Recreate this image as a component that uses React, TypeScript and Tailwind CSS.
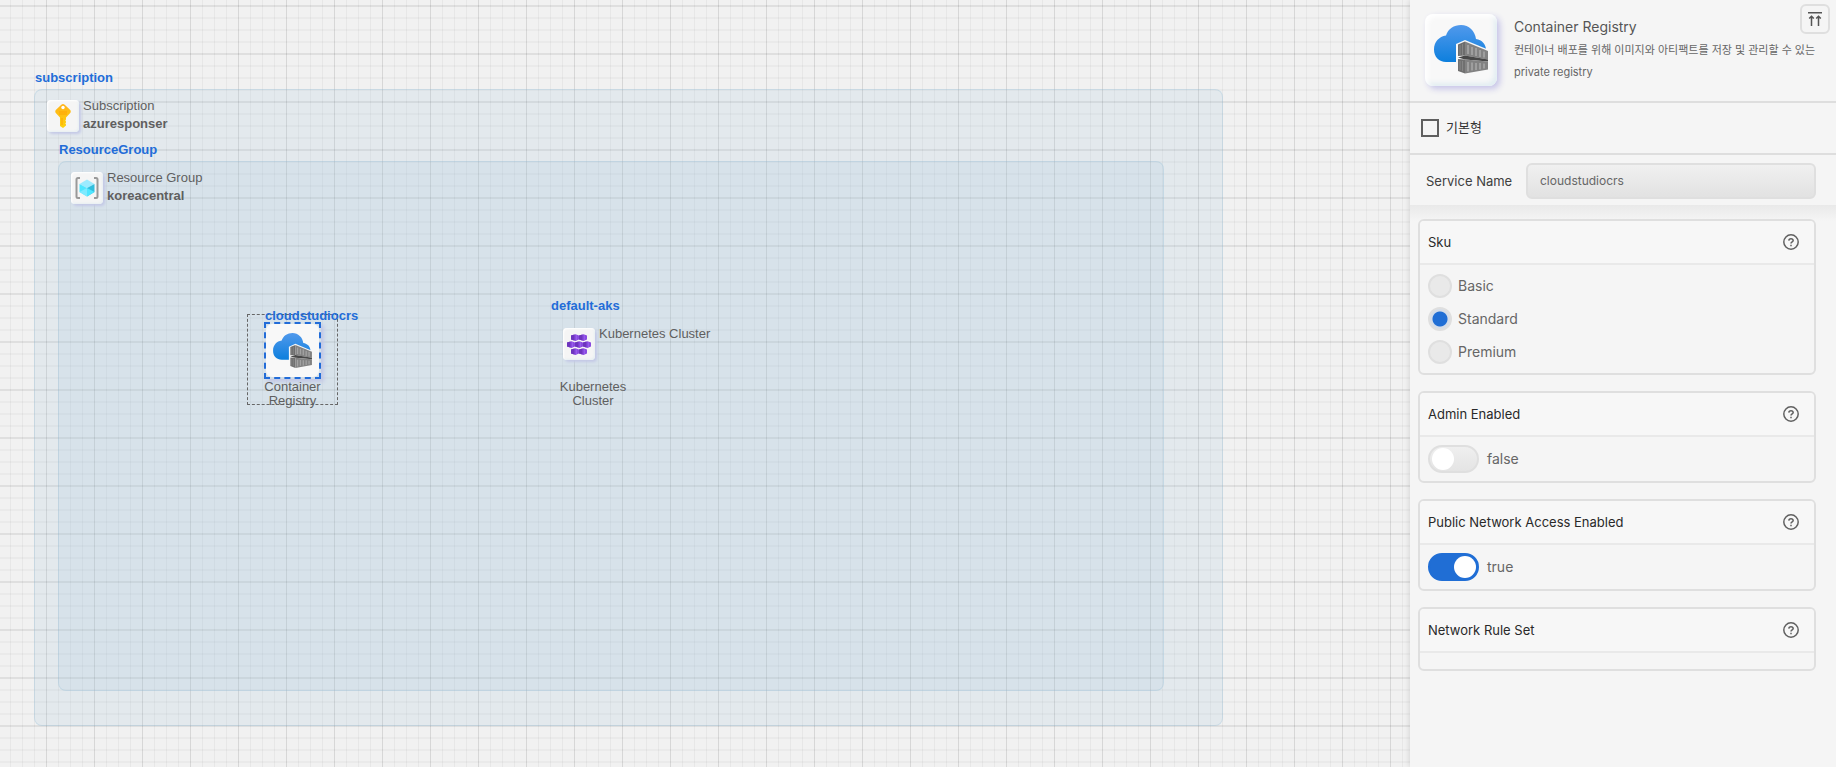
import { useId, useState, type ReactNode } from "react";

function RegistryIcon({ className }: { className: string }) {
  const id = useId();
  return (
    <svg viewBox="0 0 54 50" className={className} aria-hidden="true">
      <defs>
        <linearGradient id={id} x1="0" y1="0" x2="0" y2="1">
          <stop offset="0" stopColor="#5199ec" />
          <stop offset="1" stopColor="#0d7fdd" />
        </linearGradient>
      </defs>
      <path
        d="M12 37C5 37 0 32 0 24.500C0 17 5 11.500 12 10.500C14 4 20 0 27 0C35 0 41 6 42 14C48 15 52 19 52 25C52 32 47 37 40 37Z"
        fill={`url(#${id})`}
      />
      <path d="M22 19L31 15L54 24.500V46L32 50L22 46Z" fill="#f8f8f8" />
      <path d="M24 19.500L31 16.500V30.500L24 31Z" fill="#6c6c6c" />
      <path d="M31 16.500L54 26V34.500L31 30.500Z" fill="#828282" />
      <path d="M24 32.500L31 30.500L54 34.500V36.500L31 34.500Z" fill="#484848" />
      <path d="M24 34L31 34.500V48.500L24 46Z" fill="#707070" />
      <path d="M31 34.500L54 36.500V44.500L31 48.500Z" fill="#828282" />
      <path
        d="M34 20V29M38 22V30M42 23V31M46 25V32M50 26.500V32.500M34 37V46.500M38 37.500V45.500M42 38V45M46 38V44.500M50 38.500V43.500"
        stroke="#a2a2a2"
        strokeWidth="1.800"
      />
      <path d="M26 20V30M28.500 19V30M26 36V45M28.500 36V46" stroke="#858585" />
    </svg>
  );
}

function KeyIcon() {
  return (
    <svg viewBox="0 0 18 24" className="h-6 w-[18px]" aria-hidden="true">
      <defs>
        <linearGradient id="key" x1="0" y1="0" x2="0" y2="1">
          <stop offset="0" stopColor="#ffb31a" />
          <stop offset="1" stopColor="#fdd10e" />
        </linearGradient>
      </defs>
      <path
        d="M7.300 .7Q9 -.5 10.700 .7L16 5.800Q17.500 7.500 16 9.300L12 13.500V15.500L11.300 16.500L12 17.500V18.500L11.300 19.500L12 20.500V21.500L9 24L6 22V13.500L2 9.300Q.5 7.500 2 5.800Z"
        fill="url(#key)"
      />
      <circle cx="9" cy="3.500" r="1.700" fill="#fff" />
      <path d="M5 8H13M5 10H13" stroke="#ffa000" strokeWidth=".8" />
      <path d="M8 14V21" stroke="#ffa000" strokeWidth=".8" />
    </svg>
  );
}

function ResourceGroupIcon() {
  return (
    <svg viewBox="0 0 24 22" className="h-[22px] w-6" aria-hidden="true">
      <path
        d="M5 1H3Q1.500 1 1.500 2.500V19.500Q1.500 21 3 21H5M19 1H21Q22.500 1 22.500 2.500V19.500Q22.500 21 21 21H19"
        fill="none"
        stroke="#999"
        strokeWidth="2"
      />
      <path d="M12 2.500L19.500 7L12 11L4.500 7Z" fill="#9cebff" />
      <path d="M4.500 7L12 11V19.500L4.500 15Z" fill="#50e6ff" />
      <path d="M19.500 7L12 11V19.500L19.500 15Z" fill="#32bedd" />
      <path d="M4.500 15L12 11V19.500Z" fill="#7eeaff" />
      <path d="M19.500 15L12 11V19.500Z" fill="#50e6ff" />
    </svg>
  );
}

const pods = [
  [4, 0], [12, 0],
  [0, 7], [8, 7], [16, 7],
  [4, 14], [12, 14],
];

function KubernetesIcon() {
  return (
    <svg viewBox="0 0 24 21" className="h-[21px] w-6" aria-hidden="true">
      {pods.map(([x, y]) => (
        <g key={`${x}-${y}`} transform={`translate(${x} ${y})`}>
          <path d="M0 1.500L4.500 .2L8 1.500V5.500L4.500 6.900L0 5.500Z" fill="#8a4ae0" />
          <path d="M0 1.500L3.500 .5V6.600L0 5.500Z" fill="#6d35bd" />
          <path d="M5.500 1.200V6" stroke="#9a66ee" strokeWidth=".7" />
        </g>
      ))}
    </svg>
  );
}

function Tile({ children }: { children: ReactNode }) {
  return (
    <span className="flex size-8 shrink-0 items-center justify-center rounded bg-[#f5f5f5] shadow-[2px_2px_3px_#c3c8e6,inset_1px_1px_2px_#ffffff,inset_-1px_-1px_2px_#e6eff2]">
      {children}
    </span>
  );
}

function NodeHeading({ icon, kind, name }: { icon: ReactNode; kind: string; name?: string }) {
  return (
    <div className="flex gap-1">
      <Tile>{icon}</Tile>
      <p className="-mt-[3px] flex flex-col whitespace-nowrap text-[13px] leading-[18px] text-[#5f5f5f]">
        <span>{kind}</span>
        {name && <strong>{name}</strong>}
      </p>
    </div>
  );
}

function Canvas() {
  return (
    <main className="relative min-w-0 flex-1 overflow-hidden bg-[#f1f1f1] font-['Liberation_Sans',Arial,sans-serif] text-[13px]">
      <div
        aria-hidden="true"
        className="absolute inset-0 bg-[linear-gradient(to_right,#00000012_1px,transparent_1px),linear-gradient(to_bottom,#0000000c_2px,transparent_2px),linear-gradient(to_right,#0000000b_1px,transparent_1px),linear-gradient(to_bottom,#00000007_2px,transparent_2px)] bg-[size:48px_48px,48px_48px,12px_12px,12px_12px] bg-[position:46px_5px,46px_5px,10px_5px,10px_5px]"
      />

      <section className="absolute top-[89px] left-[34px] h-[637px] w-[1189px] rounded-lg border border-[#99bfd84d] bg-[#99bfd829]">
        <h2 className="absolute -top-5 left-0 leading-4 font-bold text-[#226cd8]">subscription</h2>
        <div className="absolute top-[10px] left-[12px]">
          <NodeHeading icon={<KeyIcon />} kind="Subscription" name="azuresponser" />
        </div>
        <section className="absolute top-[71px] left-[23px] h-[530px] w-[1106px] rounded-lg border border-[#99bfd84d] bg-[#99bfd829]">
          <h2 className="absolute -top-5 left-0 leading-4 font-bold text-[#226cd8]">ResourceGroup</h2>
          <div className="absolute top-[10px] left-[12px]">
            <NodeHeading icon={<ResourceGroupIcon />} kind="Resource Group" name="koreacentral" />
          </div>
        </section>
      </section>

      <div className="absolute top-[314px] left-[247px] size-[91px] border border-dashed border-[#666]" />
      <div className="absolute top-[322px] left-[264px] flex w-[57px] flex-col items-center">
        <span className="flex size-[57px] border-2 border-dashed border-[#226cd8] shadow-[3px_3px_4px_#c3c8e6]">
          <span className="flex flex-1 items-center justify-center rounded-md bg-[#f8f8f8]">
            <RegistryIcon className="h-9 w-[39px]" />
          </span>
        </span>
        <p className="mt-px text-center leading-[14px] text-[#5f5f5f]">Container Registry</p>
      </div>
      <h3 className="absolute top-[308px] left-[265px] leading-4 font-bold text-[#226cd8]">cloudstudiocrs</h3>

      <h3 className="absolute top-[298px] left-[551px] leading-4 font-bold text-[#226cd8]">default-aks</h3>
      <div className="absolute top-[328px] left-[563px]">
        <NodeHeading icon={<KubernetesIcon />} kind="Kubernetes Cluster" />
      </div>
      <p className="absolute top-[380px] left-[557px] w-[72px] text-center leading-[14px] text-[#5f5f5f]">
        Kubernetes Cluster
      </p>
    </main>
  );
}

function HelpIcon() {
  return (
    <svg viewBox="0 0 16 16" className="size-4" fill="none" stroke="#616161" strokeWidth="1.500" aria-hidden="true">
      <circle cx="8" cy="8" r="7.200" />
      <path d="M5.800 6.600Q5.900 4.700 8 4.700T10.200 6.500C10.200 7.800 8 7.900 8 9.500" />
      <path d="M8 10.700V12.200" />
    </svg>
  );
}

function Card({ title, children }: { title: string; children?: ReactNode }) {
  return (
    <section className="overflow-hidden rounded-md border-2 border-[#dfdfdf] bg-[#f5f5f5]">
      <header className="flex h-11 items-center justify-between border-b-2 border-[#e9e9e9] bg-[#f7f7f7] pr-[15px] pl-2">
        <h2 className="text-[13px] leading-5 text-[#292929]">{title}</h2>
        <button type="button" aria-label={`About ${title}`}>
          <HelpIcon />
        </button>
      </header>
      <div className="min-h-4 px-2">{children}</div>
    </section>
  );
}

function Toggle({ label, initial }: { label: string; initial: boolean }) {
  const [on, setOn] = useState(initial);
  return (
    <label className="flex items-center gap-2 py-2 text-sm text-[#666]">
      <span className="relative flex h-7 w-[51px]">
        <input
          type="checkbox"
          role="switch"
          aria-label={label}
          checked={on}
          onChange={() => setOn(!on)}
          className="peer h-7 w-full appearance-none rounded-full border-2 border-[#dfdfdf] bg-linear-to-b from-[#efefef] to-[#e4e4e4] checked:border-[#206ed5] checked:bg-[#206ed5] checked:bg-none"
        />
        <span className="pointer-events-none absolute top-[3px] left-1 size-[22px] rounded-full bg-white peer-checked:left-[26px]" />
      </span>
      {String(on)}
    </label>
  );
}

function SkuOptions() {
  const [sku, setSku] = useState("Standard");
  return (
    <div className="flex flex-col gap-[9px] py-[9px]">
      {["Basic", "Standard", "Premium"].map((option) => (
        <label key={option} className="flex items-center gap-1.5 text-sm leading-6 text-[#666]">
          <input
            type="radio"
            name="sku"
            checked={sku === option}
            onChange={() => setSku(option)}
            className="size-6 appearance-none rounded-full border-2 border-[#dfdfdf] bg-[#e9e9e9] checked:bg-[radial-gradient(circle,#206ed5_7px,#d5dde9_8px)]"
          />
          {option}
        </label>
      ))}
    </div>
  );
}

function Panel() {
  return (
    <aside className="z-10 flex w-[426px] shrink-0 flex-col bg-[#f5f5f5] font-[Inter,'Noto_Sans_CJK_KR',sans-serif] shadow-[0_0_6px_#00000026]">
      <header className="relative flex h-[103px] gap-[17px] border-b-2 border-[#dedede] pt-3.5 pl-[15px]">
        <span className="flex size-[72px] shrink-0 items-center justify-center rounded-lg bg-[#f8f8f8] shadow-[3px_3px_6px_#c5c3e8,inset_3px_3px_5px_#ffffff,inset_-3px_-3px_5px_#e1edf2]">
          <RegistryIcon className="h-[50px] w-[54px]" />
        </span>
        <div className="pt-0.5 text-[#666]">
          <h1 className="text-sm leading-[22px] text-[#555]">Container Registry</h1>
          <p className="mt-px text-[11px] leading-[22px] whitespace-nowrap">
            컨테이너 배포를 위해 이미지와 아티팩트를 저장 및 관리할 수 있는
            <br />
            private registry
          </p>
        </div>
        <button
          type="button"
          aria-label="Scroll to top"
          className="absolute top-1 right-1.5 flex size-[30px] items-center justify-center rounded-md border-2 border-[#dfdfdf] bg-[#f5f5f5]"
        >
          <svg viewBox="0 0 14 14" className="size-3.5" fill="none" stroke="#555" strokeWidth="1.500" aria-hidden="true">
            <path d="M0 .8H14M3.500 14V4.500M1.200 6.500L3.500 4.200L5.800 6.500M10.500 14V4.500M8.200 6.500L10.500 4.200L12.800 6.500" />
          </svg>
        </button>
      </header>

      <div className="flex h-[52px] items-center border-b-2 border-[#dedede] pl-[11px]">
        <label className="flex items-center gap-[7px] text-[13px] text-[#333]">
          <input type="checkbox" className="size-[18px] appearance-none border-2 border-[#5f5f5f] checked:bg-[#5f5f5f]" />
          기본형
        </label>
      </div>

      <div className="flex h-[50px] items-center pt-px pr-5 pl-4">
        <label htmlFor="service-name" className="w-[100px] text-[13px] leading-5 whitespace-nowrap text-[#404040]">
          Service Name
        </label>
        <input
          id="service-name"
          defaultValue="cloudstudiocrs"
          className="h-9 min-w-0 flex-1 rounded-md border-2 border-[#dfdfdf] bg-linear-to-b from-[#f0f0f0] to-[#e2e2e2] px-3 text-xs text-[#666]"
        />
      </div>

      <div className="flex flex-1 flex-col gap-4 bg-[linear-gradient(#e9e9e9,#f5f5f5_16px)] pt-3.5 pr-5 pl-2">
        <Card title="Sku">
          <SkuOptions />
        </Card>
        <Card title="Admin Enabled">
          <Toggle label="Admin Enabled" initial={false} />
        </Card>
        <Card title="Public Network Access Enabled">
          <Toggle label="Public Network Access Enabled" initial={true} />
        </Card>
        <Card title="Network Rule Set" />
      </div>
    </aside>
  );
}

export default function App() {
  return (
    <div className="flex min-h-screen">
      <Canvas />
      <Panel />
    </div>
  );
}
